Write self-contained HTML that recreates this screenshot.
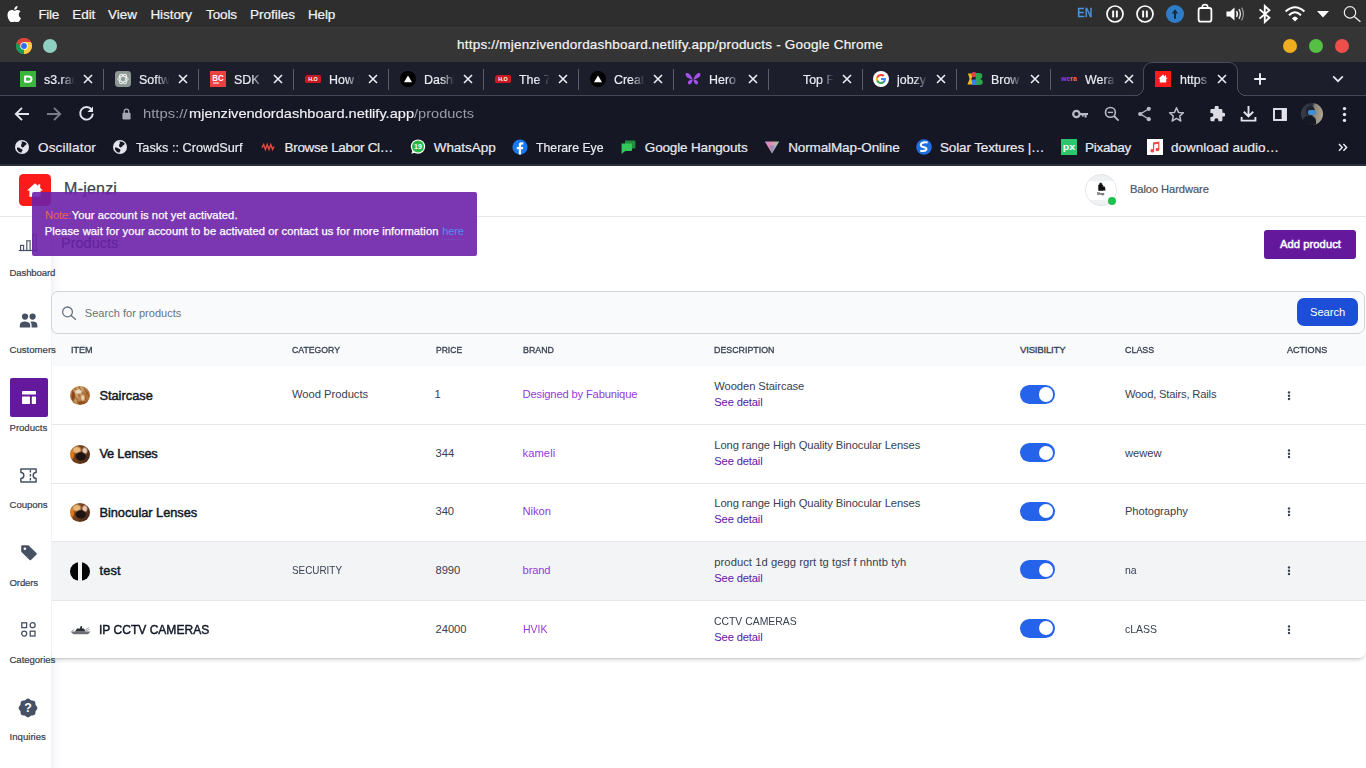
<!DOCTYPE html>
<html>
<head>
<meta charset="utf-8">
<title>products</title>
<style>
*{box-sizing:border-box;margin:0;padding:0}
html,body{width:1366px;height:768px;overflow:hidden;background:#fff;font-family:"Liberation Sans",sans-serif;font-size:12px;line-height:20px}
body{position:relative}
.abs{position:absolute;display:block}
.t{position:absolute;display:block;white-space:pre;transform-origin:0 50%;font-family:"Liberation Sans",sans-serif}
#page{position:absolute;left:0;top:0;width:1366px;height:768px;background:#fff;overflow:hidden}
#menubar{position:absolute;left:0;top:0;width:1366px;height:28px;background:#2e2e2e;border-bottom:1px solid #3b3a39;overflow:hidden}
#titlebar{position:absolute;left:0;top:28px;width:1366px;height:34px;background:#353535;overflow:hidden}
#tabs{position:absolute;left:0;top:62px;width:1366px;height:34px;background:#1c1e2c;overflow:hidden}
.lbl{font-size:13.5px;line-height:20px;color:#eceef4;width:33.7px;transform:scaleX(.92);overflow:hidden;-webkit-text-stroke:.2px #eceef4;-webkit-mask-image:linear-gradient(90deg,#000 55%,transparent 98%);mask-image:linear-gradient(90deg,#000 55%,transparent 98%)}
#toolbar{position:absolute;left:0;top:96px;width:1366px;height:35px;background:#151724;overflow:hidden}
#bookmarks{position:absolute;left:0;top:131px;width:1366px;height:35px;background:#151724;overflow:hidden}
</style>
</head>
<body>
<div id="page">
<div class="abs" style="left:51px;top:217px;width:11px;height:551px;background:linear-gradient(90deg,#f1f2f5,#fafafb 45%,#fff)"></div>
<div class="abs" style="left:0px;top:216px;width:1366px;height:1px;background:#e5e7eb;"></div>
<div class="abs" style="left:19px;top:174px;width:32px;height:32px;background:#fb1b1b;border-radius:4.5px;"></div>
<svg class="abs" style="left:26px;top:182px;" width="18" height="16" viewBox="0 0 18 16"><path d="M9 1.2 L1 8.4 H3.4 V14.8 H14.6 V8.4 H17 L14.2 5.9 V2.2 H12.2 V4.1 Z" fill="#fff"/></svg>
<span class="t" style="left:64.1px;top:177.0px;font-size:16px;line-height:24px;color:#3d4552;letter-spacing:0.205px;-webkit-text-stroke:0.25px #3d4552;">M-jenzi</span>
<div class="abs" style="left:1085px;top:174px;width:32px;height:32px;border-radius:50%;background:#f0f1f3;border:1px solid #e2e4e8;overflow:hidden"><div class="abs" style="left:0;top:6px;width:32px;height:19px;background:#fff"></div></div>
<svg class="abs" style="left:1096.5px;top:182px;" width="9" height="9" viewBox="0 0 9 9"><path d="M1.6 3 H5.8 V8.4 H1.6 Z M2.6 3 V2 A1.1 1.1 0 0 1 4.8 2 V3" fill="#111" stroke="#111" stroke-width=".6"/><path d="M5 4.6 H7.8 L8.6 8.4 H5 Z" fill="#111"/></svg>
<span class="t" style="left:1097.4px;top:191.2px;font-size:3.4px;line-height:6px;color:#111;font-weight:700;transform:scaleX(0.8722);">Shop</span>
<div class="abs" style="left:1108px;top:196.8px;width:8px;height:8px;background:#1fc14e;border-radius:50%;"></div>
<span class="t" style="left:1129.9px;top:179.0px;font-size:11.2px;line-height:20px;color:#4b5563;letter-spacing:-0.088px;-webkit-text-stroke:0.2px #4b5563;">Baloo Hardware</span>
<span class="t" style="left:61.0px;top:232.0px;font-size:14.4px;line-height:22px;color:#1f2937;letter-spacing:0.075px;-webkit-text-stroke:0.25px #1f2937;">Products</span>
<div class="abs" style="left:1264px;top:230px;width:92px;height:28.6px;background:#64199c;border-radius:3px;"></div>
<span class="t" style="left:1280.0px;top:234.0px;font-size:11.2px;line-height:20px;color:#fff;letter-spacing:0.060px;-webkit-text-stroke:0.45px #fff;">Add product</span>
<div class="abs" style="left:51.3px;top:291px;width:1314.2px;height:42.5px;background:#f9fafb;border:1px solid #d1d5db;border-radius:7px"></div>
<svg class="abs" style="left:60px;top:304px;" width="18" height="18" viewBox="0 0 18 18"><circle cx="7.5" cy="7.9" r="4.9" fill="none" stroke="#6b7280" stroke-width="1.3"/><path d="M11 11.5 L15.4 15.2" stroke="#6b7280" stroke-width="1.4" stroke-linecap="round"/></svg>
<span class="t" style="left:84.8px;top:302.6px;font-size:11px;line-height:20px;color:#6b7280;letter-spacing:0.032px;">Search for products</span>
<div class="abs" style="left:1297px;top:298px;width:61px;height:28px;background:#1d4ed8;border-radius:7px;"></div>
<span class="t" style="left:1310.0px;top:302.0px;font-size:11.2px;line-height:20px;color:#fff;letter-spacing:-0.042px;">Search</span>
<div class="abs" style="left:51.5px;top:333.5px;width:1314.5px;height:324.4px;background:#fff;border-radius:0 0 7px 0"></div>
<div class="abs" style="left:51.5px;top:649px;width:1313.5px;height:8.9px;border-radius:0 0 7px 0;box-shadow:0 2px 4px rgba(0,0,0,.14),0 1px 2px rgba(0,0,0,.10);clip-path:inset(0 -10px -10px 0)"></div>
<div class="abs" style="left:51.5px;top:649px;width:1314.5px;height:8.9px;background:#fff;border-radius:0 0 7px 0;"></div>
<div class="abs" style="left:51.5px;top:334px;width:1314.5px;height:31.7px;background:#f9fafb;"></div>
<span class="t" style="left:70.7px;top:339.8px;font-size:9.7px;line-height:20px;color:#374151;transform:scaleX(0.9334);-webkit-text-stroke:0.32px #374151;">ITEM</span>
<span class="t" style="left:292.0px;top:339.8px;font-size:9.7px;line-height:20px;color:#374151;transform:scaleX(0.8975);-webkit-text-stroke:0.32px #374151;">CATEGORY</span>
<span class="t" style="left:435.5px;top:339.8px;font-size:9.7px;line-height:20px;color:#374151;transform:scaleX(0.8815);-webkit-text-stroke:0.32px #374151;">PRICE</span>
<span class="t" style="left:522.5px;top:339.8px;font-size:9.7px;line-height:20px;color:#374151;transform:scaleX(0.9139);-webkit-text-stroke:0.32px #374151;">BRAND</span>
<span class="t" style="left:714.3px;top:339.8px;font-size:9.7px;line-height:20px;color:#374151;transform:scaleX(0.9121);-webkit-text-stroke:0.32px #374151;">DESCRIPTION</span>
<span class="t" style="left:1020.0px;top:339.8px;font-size:9.7px;line-height:20px;color:#374151;letter-spacing:-0.252px;-webkit-text-stroke:0.32px #374151;">VISIBILITY</span>
<span class="t" style="left:1124.9px;top:339.8px;font-size:9.7px;line-height:20px;color:#374151;transform:scaleX(0.9188);-webkit-text-stroke:0.32px #374151;">CLASS</span>
<span class="t" style="left:1287.1px;top:339.8px;font-size:9.7px;line-height:20px;color:#374151;transform:scaleX(0.9335);-webkit-text-stroke:0.32px #374151;">ACTIONS</span>
<div class="abs" style="left:51.5px;top:541.3px;width:1314.5px;height:58.8px;background:#f3f4f6;"></div>
<div class="abs" style="left:51.5px;top:423.8px;width:1314.5px;height:1px;background:#e5e7eb;"></div>
<div class="abs" style="left:51.5px;top:482.7px;width:1314.5px;height:1px;background:#e5e7eb;"></div>
<div class="abs" style="left:51.5px;top:540.8px;width:1314.5px;height:1px;background:#e5e7eb;"></div>
<div class="abs" style="left:51.5px;top:599.6px;width:1314.5px;height:1px;background:#e5e7eb;"></div>
<div class="abs" style="left:70px;top:385.9px;width:20px;height:19.4px;border-radius:50%;background:radial-gradient(ellipse 22% 14% at 42% 30%,#e9dcc6 0 50%,transparent 100%),radial-gradient(ellipse 14% 22% at 64% 62%,#e6cfa6 0 40%,transparent 100%),radial-gradient(ellipse 12% 34% at 16% 52%,#8a4518 0 50%,transparent 100%),radial-gradient(ellipse 30% 12% at 60% 88%,#94501e 0 50%,transparent 100%),repeating-linear-gradient(60deg,rgba(120,60,20,.35) 0 1.5px,transparent 1.5px 4px),linear-gradient(120deg,#b98348,#cfa06a 40%,#ab6a30 70%,#bd8a50)"></div>
<span class="t" style="left:99.4px;top:385.7px;font-size:12.8px;line-height:20px;color:#111827;letter-spacing:0.006px;-webkit-text-stroke:0.45px #111827;">Staircase</span>
<span class="t" style="left:292.0px;top:384.4px;font-size:11.2px;line-height:20px;color:#374151;letter-spacing:-0.014px;">Wood Products</span>
<span class="t" style="left:434.6px;top:384.4px;font-size:11.2px;line-height:20px;color:#374151;">1</span>
<span class="t" style="left:522.6px;top:384.4px;font-size:11.2px;line-height:20px;color:#9639de;letter-spacing:-0.166px;">Designed by Fabunique</span>
<span class="t" style="left:714.3px;top:376.4px;font-size:11.2px;line-height:20px;color:#374151;letter-spacing:-0.082px;">Wooden Staircase</span>
<span class="t" style="left:714.3px;top:392.3px;font-size:11.2px;line-height:20px;color:#5d14a6;letter-spacing:-0.157px;">See detail</span>
<div class="abs" style="left:1020px;top:384.8px;width:35.2px;height:19.2px;border-radius:10px;background:#2563eb"></div>
<div class="abs" style="left:1038.9px;top:387.1px;width:14.6px;height:14.6px;border-radius:50%;background:#fff"></div>
<span class="t" style="left:1124.9px;top:384.4px;font-size:11.2px;line-height:20px;color:#374151;letter-spacing:-0.185px;">Wood, Stairs, Rails</span>
<svg class="abs" style="left:1287.3px;top:390.6px;" width="4" height="10" viewBox="0 0 4 10"><circle cx="2" cy="1.4" r="1.2" fill="#374151"/><circle cx="2" cy="4.7" r="1.2" fill="#374151"/><circle cx="2" cy="8" r="1.2" fill="#374151"/></svg>
<div class="abs" style="left:70px;top:444.5px;width:20px;height:19px;border-radius:50%;background:radial-gradient(ellipse 30% 26% at 54% 60%,#1c1412 0 70%,transparent 100%),radial-gradient(ellipse 16% 22% at 74% 30%,#e8c8b0 0 50%,transparent 100%),radial-gradient(ellipse 26% 22% at 34% 26%,#e9b878 0 55%,transparent 100%),radial-gradient(ellipse 14% 30% at 10% 50%,#e07a18 0 50%,transparent 100%),linear-gradient(120deg,#8a5226,#6e3c1c 55%,#3a2016)"></div>
<span class="t" style="left:99.4px;top:444.3px;font-size:12.8px;line-height:20px;color:#111827;letter-spacing:-0.176px;-webkit-text-stroke:0.45px #111827;">Ve Lenses</span>
<span class="t" style="left:435.6px;top:443.0px;font-size:11.2px;line-height:20px;color:#374151;letter-spacing:-0.057px;">344</span>
<span class="t" style="left:522.6px;top:443.0px;font-size:11.2px;line-height:20px;color:#9639de;letter-spacing:0.045px;">kameli</span>
<span class="t" style="left:714.3px;top:435.0px;font-size:11.2px;line-height:20px;color:#374151;letter-spacing:-0.092px;">Long range High Quality Binocular Lenses</span>
<span class="t" style="left:714.3px;top:450.9px;font-size:11.2px;line-height:20px;color:#5d14a6;letter-spacing:-0.157px;">See detail</span>
<div class="abs" style="left:1020px;top:443.2px;width:35.2px;height:19.2px;border-radius:10px;background:#2563eb"></div>
<div class="abs" style="left:1038.9px;top:445.5px;width:14.6px;height:14.6px;border-radius:50%;background:#fff"></div>
<span class="t" style="left:1124.9px;top:443.0px;font-size:11.2px;line-height:20px;color:#374151;letter-spacing:0.003px;">wewew</span>
<svg class="abs" style="left:1287.3px;top:449.2px;" width="4" height="10" viewBox="0 0 4 10"><circle cx="2" cy="1.4" r="1.2" fill="#374151"/><circle cx="2" cy="4.7" r="1.2" fill="#374151"/><circle cx="2" cy="8" r="1.2" fill="#374151"/></svg>
<div class="abs" style="left:70px;top:502.7px;width:20px;height:19px;border-radius:50%;background:radial-gradient(ellipse 30% 26% at 54% 60%,#1c1412 0 70%,transparent 100%),radial-gradient(ellipse 16% 22% at 74% 30%,#e8c8b0 0 50%,transparent 100%),radial-gradient(ellipse 26% 22% at 34% 26%,#e9b878 0 55%,transparent 100%),radial-gradient(ellipse 14% 30% at 10% 50%,#e07a18 0 50%,transparent 100%),linear-gradient(120deg,#8a5226,#6e3c1c 55%,#3a2016)"></div>
<span class="t" style="left:99.4px;top:502.5px;font-size:12.8px;line-height:20px;color:#111827;letter-spacing:-0.023px;-webkit-text-stroke:0.45px #111827;">Binocular Lenses</span>
<span class="t" style="left:435.6px;top:501.2px;font-size:11.2px;line-height:20px;color:#374151;letter-spacing:-0.157px;">340</span>
<span class="t" style="left:522.6px;top:501.2px;font-size:11.2px;line-height:20px;color:#9639de;letter-spacing:-0.082px;">Nikon</span>
<span class="t" style="left:714.3px;top:493.2px;font-size:11.2px;line-height:20px;color:#374151;letter-spacing:-0.092px;">Long range High Quality Binocular Lenses</span>
<span class="t" style="left:714.3px;top:509.1px;font-size:11.2px;line-height:20px;color:#5d14a6;letter-spacing:-0.157px;">See detail</span>
<div class="abs" style="left:1020px;top:501.6px;width:35.2px;height:19.2px;border-radius:10px;background:#2563eb"></div>
<div class="abs" style="left:1038.9px;top:503.9px;width:14.6px;height:14.6px;border-radius:50%;background:#fff"></div>
<span class="t" style="left:1124.9px;top:501.2px;font-size:11.2px;line-height:20px;color:#374151;letter-spacing:-0.041px;">Photography</span>
<svg class="abs" style="left:1287.3px;top:507.4px;" width="4" height="10" viewBox="0 0 4 10"><circle cx="2" cy="1.4" r="1.2" fill="#374151"/><circle cx="2" cy="4.7" r="1.2" fill="#374151"/><circle cx="2" cy="8" r="1.2" fill="#374151"/></svg>
<div class="abs" style="left:70px;top:561.8px;width:20px;height:19px;border-radius:50%;background:linear-gradient(90deg,#050505 0 38%,#f4f4f4 42% 58%,#050505 62%)"></div>
<span class="t" style="left:99.4px;top:560.5px;font-size:12.8px;line-height:20px;color:#111827;letter-spacing:0.215px;-webkit-text-stroke:0.45px #111827;">test</span>
<span class="t" style="left:292.0px;top:560.2px;font-size:11.2px;line-height:20px;color:#374151;transform:scaleX(0.8837);">SECURITY</span>
<span class="t" style="left:435.6px;top:560.2px;font-size:11.2px;line-height:20px;color:#374151;letter-spacing:-0.123px;">8990</span>
<span class="t" style="left:522.6px;top:560.2px;font-size:11.2px;line-height:20px;color:#9639de;letter-spacing:-0.165px;">brand</span>
<span class="t" style="left:714.3px;top:552.2px;font-size:11.2px;line-height:20px;color:#374151;letter-spacing:0.058px;">product 1d gegg rgrt tg tgsf f nhntb tyh</span>
<span class="t" style="left:714.3px;top:568.1px;font-size:11.2px;line-height:20px;color:#5d14a6;letter-spacing:-0.157px;">See detail</span>
<div class="abs" style="left:1020px;top:560.3px;width:35.2px;height:19.2px;border-radius:10px;background:#2563eb"></div>
<div class="abs" style="left:1038.9px;top:562.6px;width:14.6px;height:14.6px;border-radius:50%;background:#fff"></div>
<span class="t" style="left:1124.9px;top:560.2px;font-size:11.2px;line-height:20px;color:#374151;transform:scaleX(0.9395);">na</span>
<svg class="abs" style="left:1287.3px;top:566.4px;" width="4" height="10" viewBox="0 0 4 10"><circle cx="2" cy="1.4" r="1.2" fill="#374151"/><circle cx="2" cy="4.7" r="1.2" fill="#374151"/><circle cx="2" cy="8" r="1.2" fill="#374151"/></svg>
<svg class="abs" style="left:69.5px;top:623.8px;" width="21" height="11" viewBox="0 0 21 11"><path d="M0.5 7.6 H20.5 L18 10.2 H3.4 Z" fill="#6b6f76"/><path d="M5 7.4 L7 4.6 H10 L10.6 2 H11.8 L12.2 4.6 H14 L15.6 7.4 Z" fill="#2c2f35"/><path d="M14.6 6.8 L18.8 3.4 M16 7 L19.8 5" stroke="#8d9096" stroke-width=".8"/><path d="M2 7 L4.4 5.6" stroke="#8d9096" stroke-width=".8"/></svg>
<span class="t" style="left:99.4px;top:620.1px;font-size:12.8px;line-height:20px;color:#111827;transform:scaleX(0.9411);-webkit-text-stroke:0.45px #111827;">IP CCTV CAMERAS</span>
<span class="t" style="left:435.6px;top:618.8px;font-size:11.2px;line-height:20px;color:#374151;letter-spacing:-0.065px;">24000</span>
<span class="t" style="left:522.6px;top:618.8px;font-size:11.2px;line-height:20px;color:#9639de;transform:scaleX(0.9378);">HVIK</span>
<span class="t" style="left:714.3px;top:610.8px;font-size:11.2px;line-height:20px;color:#374151;transform:scaleX(0.9292);">CCTV CAMERAS</span>
<span class="t" style="left:714.3px;top:626.7px;font-size:11.2px;line-height:20px;color:#5d14a6;letter-spacing:-0.157px;">See detail</span>
<div class="abs" style="left:1020px;top:618.6px;width:35.2px;height:19.2px;border-radius:10px;background:#2563eb"></div>
<div class="abs" style="left:1038.9px;top:620.9px;width:14.6px;height:14.6px;border-radius:50%;background:#fff"></div>
<span class="t" style="left:1124.9px;top:618.8px;font-size:11.2px;line-height:20px;color:#374151;transform:scaleX(0.9385);">cLASS</span>
<svg class="abs" style="left:1287.3px;top:625.0px;" width="4" height="10" viewBox="0 0 4 10"><circle cx="2" cy="1.4" r="1.2" fill="#374151"/><circle cx="2" cy="4.7" r="1.2" fill="#374151"/><circle cx="2" cy="8" r="1.2" fill="#374151"/></svg>
<svg class="abs" style="left:18px;top:232px;" width="20" height="20" viewBox="0 0 20 20"><g fill="none" stroke="#465264" stroke-width="1.15"><rect x="2.6" y="13.4" width="3" height="5.1"/><rect x="8.8" y="8.8" width="3.3" height="9.7"/><rect x="15" y="2.6" width="3.2" height="15.9"/><path d="M0.8 18.5 H19"/></g></svg>
<svg class="abs" style="left:19px;top:312px;" width="20" height="17" viewBox="0 0 20 17"><g fill="#465264"><circle cx="6" cy="4.6" r="3.1"/><circle cx="13.6" cy="4.6" r="3.1"/><path d="M0.8 15.6 V13.2 Q0.8 9.4 6 9.4 Q9.2 9.4 10.4 11 Q11.2 12 11.2 13.2 V15.6 Z"/><path d="M12.6 15.6 V13 Q12.6 10.8 11 9.7 Q12.2 9.4 13.6 9.4 Q18.4 9.4 18.4 13.2 V15.6 Z"/></g></svg>
<div class="abs" style="left:10px;top:378.2px;width:38px;height:38.4px;background:#64199c;border-radius:2px;"></div>
<svg class="abs" style="left:21.5px;top:391px;" width="14" height="13" viewBox="0 0 14 13"><g fill="#fff"><rect x="0" y="0" width="14" height="3.6" rx=".7"/><rect x="0" y="5.4" width="8" height="7.6" rx=".7"/><rect x="9.8" y="5.4" width="4.2" height="7.6" rx=".7"/></g></svg>
<svg class="abs" style="left:19px;top:466.5px;" width="19" height="17" viewBox="0 0 19 17"><path d="M1.9 1.9 H17.1 V5.6 A2.9 2.9 0 0 0 17.1 11.4 V15.1 H1.9 V11.4 A2.9 2.9 0 0 0 1.9 5.6 Z" fill="none" stroke="#465264" stroke-width="1.5" stroke-linejoin="round"/><path d="M11.4 3 V14" stroke="#465264" stroke-width="1.4" stroke-dasharray="2.4 1.6"/></svg>
<svg class="abs" style="left:19.5px;top:544px;" width="18" height="17" viewBox="0 0 18 17"><path d="M1.2 2.4 Q1.2 1.2 2.4 1.2 H8.4 L16.6 9.2 Q17.2 9.9 16.6 10.6 L11 16 Q10.3 16.6 9.6 16 L1.2 7.8 Z" fill="#465264"/><circle cx="4.9" cy="4.8" r="1.3" fill="#fff"/></svg>
<svg class="abs" style="left:21px;top:622px;" width="15" height="15" viewBox="0 0 15 15"><g fill="none" stroke="#465264" stroke-width="1.3"><rect x="0.8" y="0.8" width="4.8" height="4.8"/><circle cx="11.6" cy="3.2" r="2.5"/><circle cx="3.2" cy="11.6" r="2.5"/><rect x="9.2" y="9.2" width="4.8" height="4.8"/></g></svg>
<svg class="abs" style="left:18.4px;top:697.5px;" width="20" height="20" viewBox="0 0 20 20"><g fill="#465264"><rect x="2.55" y="2.55" width="14.9" height="14.9" rx="3.2"/><rect x="2.55" y="2.55" width="14.9" height="14.9" rx="3.2" transform="rotate(45 10 10)"/></g><text x="10.1" y="14.4" font-size="12.4" font-weight="700" fill="#fff" text-anchor="middle" font-family="Liberation Sans">?</text></svg>
<span class="t" style="left:9.5px;top:262.6px;font-size:9.6px;line-height:20px;color:#374151;letter-spacing:-0.137px;-webkit-text-stroke:0.2px #374151;">Dashboard</span>
<span class="t" style="left:9.5px;top:340.0px;font-size:9.6px;line-height:20px;color:#374151;letter-spacing:0.001px;-webkit-text-stroke:0.2px #374151;">Customers</span>
<span class="t" style="left:9.5px;top:418.0px;font-size:9.6px;line-height:20px;color:#374151;letter-spacing:-0.022px;-webkit-text-stroke:0.2px #374151;">Products</span>
<span class="t" style="left:9.5px;top:494.8px;font-size:9.6px;line-height:20px;color:#374151;letter-spacing:-0.044px;-webkit-text-stroke:0.2px #374151;">Coupons</span>
<span class="t" style="left:9.5px;top:572.7px;font-size:9.6px;line-height:20px;color:#374151;letter-spacing:-0.138px;-webkit-text-stroke:0.2px #374151;">Orders</span>
<span class="t" style="left:9.5px;top:649.7px;font-size:9.6px;line-height:20px;color:#374151;letter-spacing:-0.061px;-webkit-text-stroke:0.2px #374151;">Categories</span>
<span class="t" style="left:9.5px;top:727.2px;font-size:9.6px;line-height:20px;color:#374151;letter-spacing:0.015px;-webkit-text-stroke:0.2px #374151;">Inquiries</span>
<div class="abs" style="left:32px;top:192px;width:445px;height:63.8px;background:rgba(107,33,168,.9);border-radius:2px"></div>
<span class="t" style="left:45.0px;top:205.2px;font-size:11.2px;line-height:20px;color:#f5624c;letter-spacing:-0.150px;">Note:</span>
<span class="t" style="left:71.7px;top:205.2px;font-size:11.2px;line-height:20px;color:#fff;letter-spacing:0.062px;-webkit-text-stroke:0.25px #fff;">Your account is not yet activated.</span>
<span class="t" style="left:44.7px;top:221.3px;font-size:11.2px;line-height:20px;color:#fff;letter-spacing:0.089px;-webkit-text-stroke:0.25px #fff;">Please wait for your account to be activated or contact us for more information</span>
<span class="t" style="left:442.2px;top:221.3px;font-size:11.2px;line-height:20px;color:#4f8ef7;letter-spacing:-0.202px;">here</span>
<div class="abs" style="left:442.2px;top:239px;width:21.6px;height:1px;background:rgba(120,150,240,.12);"></div>
</div>
<div id="menubar">
<svg class="abs" style="left:5.5px;top:5.5px;" width="16.5" height="16.5" viewBox="0 0 24 24"><path fill="#fff" d="M12.152 6.896c-.948 0-2.415-1.078-3.96-1.04-2.04.027-3.91 1.183-4.961 3.014-2.117 3.675-.546 9.103 1.519 12.09 1.013 1.454 2.208 3.09 3.792 3.039 1.52-.065 2.09-.987 3.935-.987 1.831 0 2.35.987 3.96.948 1.637-.026 2.676-1.48 3.676-2.948 1.156-1.688 1.636-3.325 1.662-3.415-.039-.013-3.182-1.221-3.22-4.857-.026-3.04 2.48-4.494 2.597-4.559-1.429-2.09-3.623-2.324-4.39-2.376-2-.156-3.675 1.09-4.61 1.09zM15.53 3.83c.843-1.012 1.4-2.427 1.245-3.83-1.207.052-2.662.805-3.532 1.818-.78.896-1.454 2.338-1.273 3.714 1.338.104 2.715-.688 3.559-1.701"/></svg>
<span class="t" style="left:38.4px;top:4.5px;font-size:13.5px;line-height:20px;color:#f4f4f4;letter-spacing:-0.291px;-webkit-text-stroke:0.2px #f4f4f4;">File</span>
<span class="t" style="left:72.3px;top:4.5px;font-size:13.5px;line-height:20px;color:#f4f4f4;letter-spacing:-0.066px;-webkit-text-stroke:0.2px #f4f4f4;">Edit</span>
<span class="t" style="left:108.0px;top:4.5px;font-size:13.5px;line-height:20px;color:#f4f4f4;letter-spacing:-0.008px;-webkit-text-stroke:0.2px #f4f4f4;">View</span>
<span class="t" style="left:150.4px;top:4.5px;font-size:13.5px;line-height:20px;color:#f4f4f4;letter-spacing:-0.059px;-webkit-text-stroke:0.2px #f4f4f4;">History</span>
<span class="t" style="left:206.0px;top:4.5px;font-size:13.5px;line-height:20px;color:#f4f4f4;letter-spacing:-0.103px;-webkit-text-stroke:0.2px #f4f4f4;">Tools</span>
<span class="t" style="left:250.0px;top:4.5px;font-size:13.5px;line-height:20px;color:#f4f4f4;letter-spacing:-0.002px;-webkit-text-stroke:0.2px #f4f4f4;">Profiles</span>
<span class="t" style="left:308.0px;top:4.5px;font-size:13.5px;line-height:20px;color:#f4f4f4;letter-spacing:-0.191px;-webkit-text-stroke:0.2px #f4f4f4;">Help</span>
<span class="t" style="left:1077.4px;top:4.0px;font-size:12.5px;line-height:20px;color:#4d94db;transform:scaleX(1.0389);-webkit-text-stroke:0.3px #4d94db;font-family:'Liberation Mono',monospace;">EN</span>
<svg class="abs" style="left:1105px;top:4px;" width="20" height="20" viewBox="0 0 20 20"><circle cx="10" cy="10" r="8" fill="none" stroke="#fff" stroke-width="1.7"/><rect x="7.2" y="6.6" width="1.9" height="6.8" fill="#fff"/><rect x="10.9" y="6.6" width="1.9" height="6.8" fill="#fff"/></svg>
<svg class="abs" style="left:1135px;top:4px;" width="20" height="20" viewBox="0 0 20 20"><circle cx="10" cy="10" r="8" fill="none" stroke="#fff" stroke-width="1.7"/><rect x="7.2" y="6.6" width="1.9" height="6.8" fill="#fff"/><rect x="10.9" y="6.6" width="1.9" height="6.8" fill="#fff"/></svg>
<svg class="abs" style="left:1165px;top:4px;" width="20" height="20" viewBox="0 0 20 20"><circle cx="10" cy="10" r="9" fill="#2f7dc6"/><path d="M10 5.2 L6.8 9.6 H9 V14.8 H11 V9.6 H13.2 Z" fill="#1c2a3a"/></svg>
<svg class="abs" style="left:1196px;top:3px;" width="18" height="21" viewBox="0 0 18 21"><rect x="2.6" y="5" width="12.8" height="13.6" rx="2.2" fill="none" stroke="#fff" stroke-width="1.8"/><path d="M6.3 5 V3.8 A2.7 2.2 0 0 1 11.7 3.8 V5" fill="none" stroke="#fff" stroke-width="1.6"/></svg>
<svg class="abs" style="left:1225px;top:4px;" width="22" height="20" viewBox="0 0 22 20"><path d="M1.5 7.5 H5 L9.5 3.5 V16.5 L5 12.5 H1.5 Z" fill="#fff"/><path d="M11.6 7.2 Q13.2 10 11.6 12.8" stroke="#fff" stroke-width="1.5" fill="none"/><path d="M14 5.2 Q16.8 10 14 14.8" stroke="#e0e0e0" stroke-width="1.4" fill="none"/><path d="M16.6 3.6 Q20.2 10 16.6 16.4" stroke="#9a9a9a" stroke-width="1.2" fill="none"/></svg>
<svg class="abs" style="left:1256px;top:4px;" width="18" height="20" viewBox="0 0 18 20"><path d="M3.6 5.4 L13.4 13.8 L8.8 18 V2 L13.4 6.2 L3.6 14.6" fill="none" stroke="#fff" stroke-width="1.9" stroke-linejoin="miter"/></svg>
<svg class="abs" style="left:1284px;top:4px;" width="22" height="20" viewBox="0 0 22 20"><path d="M1.6 7.6 Q11 -1 20.4 7.6" stroke="#fff" stroke-width="2" fill="none"/><path d="M5 11.2 Q11 5.4 17 11.2" stroke="#fff" stroke-width="2" fill="none"/><path d="M11 12.6 Q12.8 13 14 14.4 L11 17.6 L8 14.4 Q9.2 13 11 12.6Z" fill="#fff"/></svg>
<svg class="abs" style="left:1316px;top:9px;" width="14" height="10" viewBox="0 0 14 10"><path d="M1 2 H13 L7 8.4 Z" fill="#fff"/></svg>
<svg class="abs" style="left:1340px;top:4px;" width="22" height="20" viewBox="0 0 22 20"><circle cx="10" cy="8.4" r="5.7" fill="none" stroke="#f0f0f0" stroke-width="1.2"/><path d="M14.2 12.5 L20.4 17.8" stroke="#f0f0f0" stroke-width="1.3"/></svg>
</div>
<div id="titlebar">
<svg class="abs" style="left:16px;top:10px;" width="16" height="16" viewBox="0 0 16 16"><circle cx="8" cy="8" r="8" fill="#db4437"/>
<path d="M8 8 L1.07 12 A8 8 0 0 1 1.07 4 Z" fill="#db4437"/>
<path d="M8 8 L1.07 4 A8 8 0 0 0 8 16 L11.5 10 Z" fill="#0f9d58"/>
<path d="M8 8 L8 16 A8 8 0 0 0 14.93 4 L8 4 Z" fill="#ffcd40"/>
<path d="M8 4 L14.93 4 A8 8 0 0 0 1.07 4 L4.5 10 Z" fill="#db4437"/>
<circle cx="8" cy="8" r="3.7" fill="#fff"/><circle cx="8" cy="8" r="2.9" fill="#2a6ff0"/></svg>
<div class="abs" style="left:43px;top:11px;width:14px;height:14px;background:#8fcfc1;border-radius:50%;"></div>
<span class="t" style="left:457.0px;top:6.5px;font-size:13.5px;line-height:20px;color:#f4f4f4;letter-spacing:0.216px;-webkit-text-stroke:0.2px #f4f4f4;">https://mjenzivendordashboard.netlify.app/products - Google Chrome</span>
<div class="abs" style="left:1283px;top:11px;width:14px;height:14px;background:#f0ad1f;border-radius:50%;"></div>
<div class="abs" style="left:1309px;top:11px;width:14px;height:14px;background:#55c043;border-radius:50%;"></div>
<div class="abs" style="left:1335px;top:11px;width:14px;height:14px;background:#ee4f4b;border-radius:50%;"></div>
</div>
<div id="tabs">
<svg class="abs" style="left:20px;top:9px;" width="16" height="16" viewBox="0 0 16 16"><rect width="16" height="16" fill="#3bb43c"/><path d="M5.1 5.5 H8.8 Q11.5 5.5 11.5 8.1 Q11.5 10.7 8.8 10.7 H5.1 Z" fill="none" stroke="#fff" stroke-width="2" stroke-linejoin="round"/></svg>
<span class="t lbl" style="left:44.0px;top:7.5px;">s3.rac</span>
<svg class="abs" style="left:83px;top:12.3px;" width="10" height="10" viewBox="0 0 10 10"><path d="M1 1 L9 9 M9 1 L1 9" stroke="#eceef4" stroke-width="1.6" fill="none"/></svg>
<div class="abs" style="left:103px;top:7.4px;width:1.2px;height:20.2px;background:#5b5d6c;"></div>
<svg class="abs" style="left:115px;top:9px;" width="16" height="16" viewBox="0 0 16 16"><rect width="16" height="16" rx="3.4" fill="#8d9894"/><g fill="none" stroke="#eef1f0" stroke-width="0.9"><ellipse cx="8" cy="8" rx="5.2" ry="2.7"/><ellipse cx="8" cy="8" rx="5.2" ry="2.7" transform="rotate(60 8 8)"/><ellipse cx="8" cy="8" rx="5.2" ry="2.7" transform="rotate(120 8 8)"/></g></svg>
<span class="t lbl" style="left:139.0px;top:7.5px;">Softw</span>
<svg class="abs" style="left:178px;top:12.3px;" width="10" height="10" viewBox="0 0 10 10"><path d="M1 1 L9 9 M9 1 L1 9" stroke="#eceef4" stroke-width="1.6" fill="none"/></svg>
<div class="abs" style="left:198px;top:7.4px;width:1.2px;height:20.2px;background:#5b5d6c;"></div>
<svg class="abs" style="left:210px;top:9px;" width="16" height="16" viewBox="0 0 16 16"><rect width="16" height="16" fill="#e9423f"/><text x="8" y="9.6" font-size="8.6" font-weight="700" fill="#fff" text-anchor="middle" font-family="Liberation Sans" textLength="11.5" lengthAdjust="spacingAndGlyphs">BC</text><rect x="3" y="11.4" width="6" height="1.3" fill="#fff" opacity=".8"/></svg>
<span class="t lbl" style="left:234.0px;top:7.5px;">SDK C</span>
<svg class="abs" style="left:273px;top:12.3px;" width="10" height="10" viewBox="0 0 10 10"><path d="M1 1 L9 9 M9 1 L1 9" stroke="#eceef4" stroke-width="1.6" fill="none"/></svg>
<div class="abs" style="left:293px;top:7.4px;width:1.2px;height:20.2px;background:#5b5d6c;"></div>
<svg class="abs" style="left:305px;top:9px;" width="16" height="16" viewBox="0 0 16 16"><path d="M2 4 H15 L16 5 V11 L15 12 H1 L0 11 V6 Z" fill="#c9181e"/><text x="8" y="10.3" font-size="5.4" font-weight="700" fill="#fff" text-anchor="middle" font-family="Liberation Sans">H.O</text></svg>
<span class="t lbl" style="left:329.0px;top:7.5px;">How S</span>
<svg class="abs" style="left:368px;top:12.3px;" width="10" height="10" viewBox="0 0 10 10"><path d="M1 1 L9 9 M9 1 L1 9" stroke="#eceef4" stroke-width="1.6" fill="none"/></svg>
<div class="abs" style="left:388px;top:7.4px;width:1.2px;height:20.2px;background:#5b5d6c;"></div>
<svg class="abs" style="left:400px;top:9px;" width="16" height="16" viewBox="0 0 16 16"><circle cx="8" cy="8" r="8" fill="#000"/><path d="M8 4.4 L12 11.2 H4 Z" fill="#fff"/></svg>
<span class="t lbl" style="left:424.0px;top:7.5px;">Dashl</span>
<svg class="abs" style="left:463px;top:12.3px;" width="10" height="10" viewBox="0 0 10 10"><path d="M1 1 L9 9 M9 1 L1 9" stroke="#eceef4" stroke-width="1.6" fill="none"/></svg>
<div class="abs" style="left:483px;top:7.4px;width:1.2px;height:20.2px;background:#5b5d6c;"></div>
<svg class="abs" style="left:495px;top:9px;" width="16" height="16" viewBox="0 0 16 16"><path d="M2 4 H15 L16 5 V11 L15 12 H1 L0 11 V6 Z" fill="#c9181e"/><text x="8" y="10.3" font-size="5.4" font-weight="700" fill="#fff" text-anchor="middle" font-family="Liberation Sans">H.O</text></svg>
<span class="t lbl" style="left:519.0px;top:7.5px;">The 7</span>
<svg class="abs" style="left:558px;top:12.3px;" width="10" height="10" viewBox="0 0 10 10"><path d="M1 1 L9 9 M9 1 L1 9" stroke="#eceef4" stroke-width="1.6" fill="none"/></svg>
<div class="abs" style="left:578px;top:7.4px;width:1.2px;height:20.2px;background:#5b5d6c;"></div>
<svg class="abs" style="left:590px;top:9px;" width="16" height="16" viewBox="0 0 16 16"><circle cx="8" cy="8" r="8" fill="#000"/><path d="M8 4.4 L12 11.2 H4 Z" fill="#fff"/></svg>
<span class="t lbl" style="left:614.0px;top:7.5px;">Creat</span>
<svg class="abs" style="left:653px;top:12.3px;" width="10" height="10" viewBox="0 0 10 10"><path d="M1 1 L9 9 M9 1 L1 9" stroke="#eceef4" stroke-width="1.6" fill="none"/></svg>
<div class="abs" style="left:673px;top:7.4px;width:1.2px;height:20.2px;background:#5b5d6c;"></div>
<svg class="abs" style="left:685px;top:9px;" width="16" height="16" viewBox="0 0 16 16"><g fill="#a450f0"><path d="M7.6 8.2 C5.6 2.6 2.2 1.2 0.8 2.2 C0 4.4 1.6 7.6 7.6 8.2Z"/><path d="M8.4 8.2 C10.4 2.6 13.8 1.2 15.2 2.2 C16 4.4 14.4 7.6 8.4 8.2Z"/><path d="M7.6 8.6 C4.4 8.6 2.6 10.4 3 12.6 C4.4 14.6 7 13.4 7.6 8.6Z"/><path d="M8.4 8.6 C11.6 8.6 13.4 10.4 13 12.6 C11.6 14.6 9 13.4 8.4 8.6Z"/></g></svg>
<span class="t lbl" style="left:709.0px;top:7.5px;">Hero</span>
<svg class="abs" style="left:748px;top:12.3px;" width="10" height="10" viewBox="0 0 10 10"><path d="M1 1 L9 9 M9 1 L1 9" stroke="#eceef4" stroke-width="1.6" fill="none"/></svg>
<div class="abs" style="left:768px;top:7.4px;width:1.2px;height:20.2px;background:#5b5d6c;"></div>
<svg class="abs" style="left:779px;top:9px;" width="16" height="16" viewBox="0 0 16 16"><circle cx="8" cy="8" r="6.4" fill="none" stroke="#3a1a22" stroke-width="0.8" stroke-dasharray="1 2.2" opacity=".8"/></svg>
<span class="t lbl" style="left:803.0px;top:7.5px;">Top F</span>
<svg class="abs" style="left:842px;top:12.3px;" width="10" height="10" viewBox="0 0 10 10"><path d="M1 1 L9 9 M9 1 L1 9" stroke="#eceef4" stroke-width="1.6" fill="none"/></svg>
<div class="abs" style="left:862px;top:7.4px;width:1.2px;height:20.2px;background:#5b5d6c;"></div>
<svg class="abs" style="left:873px;top:9px;" width="16" height="16" viewBox="0 0 16 16"><circle cx="8" cy="8" r="8" fill="#fff"/><path d="M12.9 8.1 c0-.4 0-.7-.1-1 H8 v1.9 h2.75 c-.12.63-.48 1.17-1.02 1.53 v1.27 h1.65 C12.35 10.9 12.9 9.6 12.9 8.1Z" fill="#4285f4"/><path d="M8 13.1 c1.38 0 2.53-.46 3.38-1.24 l-1.65-1.27 c-.46.3-1.04.49-1.73.49-1.33 0-2.46-.9-2.86-2.1 H3.43 v1.32 C4.27 11.97 6 13.1 8 13.1Z" fill="#34a853"/><path d="M5.14 8.98 c-.1-.3-.16-.63-.16-.98 s.06-.67.16-.98 V5.7 H3.43 C3.08 6.4 2.9 7.17 2.9 8 s.2 1.6.53 2.3 l1.7-1.32Z" fill="#fbbc05"/><path d="M8 4.92 c.75 0 1.42.26 1.95.76 l1.46-1.46 C10.53 3.4 9.38 2.9 8 2.9 6 2.9 4.27 4.03 3.43 5.7 l1.7 1.32 C5.54 5.8 6.67 4.92 8 4.92Z" fill="#ea4335"/></svg>
<span class="t lbl" style="left:897.0px;top:7.5px;">jobzy</span>
<svg class="abs" style="left:936px;top:12.3px;" width="10" height="10" viewBox="0 0 10 10"><path d="M1 1 L9 9 M9 1 L1 9" stroke="#eceef4" stroke-width="1.6" fill="none"/></svg>
<div class="abs" style="left:956px;top:7.4px;width:1.2px;height:20.2px;background:#5b5d6c;"></div>
<svg class="abs" style="left:967px;top:9px;" width="16" height="16" viewBox="0 0 16 16"><path d="M1 2.6 H6.6 L4.4 8 L6 13.4 H0.4 L2.6 8 Z" fill="#f6b71c"/><circle cx="7" cy="3.6" r="2.6" fill="#e9423f"/><path d="M8.6 2 H12 Q15.4 2 15.4 5 Q15.4 7.4 13 8 Q15.8 8.6 15.8 11 Q15.8 14 12.4 14 H8.6 Z" fill="#2fa64e"/><path d="M5 8.6 H9.4 V14 H5 Z" fill="#3f7ee8"/></svg>
<span class="t lbl" style="left:991.0px;top:7.5px;">Brow</span>
<svg class="abs" style="left:1030px;top:12.3px;" width="10" height="10" viewBox="0 0 10 10"><path d="M1 1 L9 9 M9 1 L1 9" stroke="#eceef4" stroke-width="1.6" fill="none"/></svg>
<div class="abs" style="left:1050px;top:7.4px;width:1.2px;height:20.2px;background:#5b5d6c;"></div>
<svg class="abs" style="left:1061px;top:9px;" width="16" height="16" viewBox="0 0 16 16"><text x="0" y="10.2" font-size="6.6" font-weight="700" font-family="Liberation Sans" fill="#8a3fe0" textLength="16" lengthAdjust="spacingAndGlyphs">we<tspan fill="#f0703c">ra</tspan></text></svg>
<span class="t lbl" style="left:1085.0px;top:7.5px;">Wera</span>
<svg class="abs" style="left:1124px;top:12.3px;" width="10" height="10" viewBox="0 0 10 10"><path d="M1 1 L9 9 M9 1 L1 9" stroke="#eceef4" stroke-width="1.6" fill="none"/></svg>
<div class="abs" style="left:0px;top:33px;width:1366px;height:1px;background:#44465a;"></div>
<div class="abs" style="left:1143px;top:0px;width:95px;height:34px;background:#151724;border:1px solid #4a4c5e;border-bottom:none;border-radius:9px 9px 0 0"></div>
<div class="abs" style="left:1135px;top:25px;width:9px;height:9px;background:radial-gradient(circle at 0 0,#1c1e2c 8px,#4a4c5e 8px,#4a4c5e 9px,#151724 9px)"></div>
<div class="abs" style="left:1237px;top:25px;width:9px;height:9px;background:radial-gradient(circle at 100% 0,#1c1e2c 8px,#4a4c5e 8px,#4a4c5e 9px,#151724 9px)"></div>
<svg class="abs" style="left:1155px;top:9px;" width="16" height="16" viewBox="0 0 16 16"><rect width="16" height="16" fill="#fb1b1b"/><path d="M8 3.6 L3.4 7.8 H4.8 V11.6 H11.2 V7.8 H12.6 L11 6.3 V4.2 H10 V5.4 Z" fill="#fff"/></svg>
<span class="t lbl" style="left:1179.6px;top:7.5px;">https</span>
<svg class="abs" style="left:1217px;top:12.3px;" width="10" height="10" viewBox="0 0 10 10"><path d="M1 1 L9 9 M9 1 L1 9" stroke="#eceef4" stroke-width="1.6" fill="none"/></svg>
<svg class="abs" style="left:1253.8px;top:11px;" width="12" height="12" viewBox="0 0 12 12"><path d="M6 0.2 V11.8 M0.2 6 H11.8" stroke="#f0f1f6" stroke-width="1.9"/></svg>
<svg class="abs" style="left:1332px;top:13px;" width="12" height="8" viewBox="0 0 12 8"><path d="M1.2 1.4 L6 6.2 L10.8 1.4" stroke="#e6e7ee" stroke-width="1.7" fill="none"/></svg>
</div>
<div id="toolbar">
<svg class="abs" style="left:14px;top:9.6px;" width="16" height="16" viewBox="0 0 16 16"><path d="M15 8 H2.4 M8 1.8 L1.8 8 L8 14.2" stroke="#e4e5ec" stroke-width="1.9" fill="none"/></svg>
<svg class="abs" style="left:46px;top:9.6px;" width="16" height="16" viewBox="0 0 16 16"><path d="M1 8 H13.6 M8 1.8 L14.2 8 L8 14.2" stroke="#7a7c8a" stroke-width="1.9" fill="none"/></svg>
<svg class="abs" style="left:78px;top:9.2px;" width="17" height="17" viewBox="0 0 17 17"><path d="M13.6 4.6 A6.3 6.3 0 1 0 14.8 8.6" stroke="#e4e5ec" stroke-width="1.9" fill="none"/><path d="M15 1.4 V7 H9.4 Z" fill="#e4e5ec"/></svg>
<svg class="abs" style="left:121.6px;top:11.6px;" width="9" height="12" viewBox="0 0 9 12"><rect x="0.4" y="4.8" width="8.2" height="6.6" rx="1" fill="#a4a6b1"/><path d="M2.3 5 V3.3 A2.2 2.2 0 0 1 6.7 3.3 V5" stroke="#a4a6b1" stroke-width="1.3" fill="none"/></svg>
<span class="t" style="left:142.6px;top:7.5px;font-size:13.5px;line-height:20px;color:#9b9dab;transform:scaleX(1.0979);">https://</span>
<span class="t" style="left:188.6px;top:7.5px;font-size:13.5px;line-height:20px;color:#f1f1f5;transform:scaleX(1.0797);-webkit-text-stroke:0.15px #f1f1f5;">mjenzivendordashboard.netlify.app</span>
<span class="t" style="left:414.0px;top:7.5px;font-size:13.5px;line-height:20px;color:#9b9dab;transform:scaleX(1.0805);">/products</span>
<svg class="abs" style="left:1072px;top:11px;" width="17" height="14" viewBox="0 0 17 14"><circle cx="4.4" cy="7" r="3.2" fill="none" stroke="#b9bbc6" stroke-width="2.2"/><path d="M7.4 7 H16 M13.6 7 V10.6 M10.8 7 V9.6" stroke="#b9bbc6" stroke-width="2.1" fill="none"/></svg>
<svg class="abs" style="left:1104px;top:10px;" width="16" height="16" viewBox="0 0 16 16"><circle cx="6.4" cy="6.4" r="4.9" fill="none" stroke="#b9bbc6" stroke-width="1.6"/><path d="M10 10 L14.6 14.6" stroke="#b9bbc6" stroke-width="1.8"/><path d="M3.8 6.4 H9" stroke="#b9bbc6" stroke-width="1.4"/></svg>
<svg class="abs" style="left:1137px;top:10px;" width="15" height="16" viewBox="0 0 15 16"><path d="M11.6 3 L3.4 8 L11.6 13" stroke="#b9bbc6" stroke-width="1.4" fill="none"/><circle cx="11.8" cy="2.8" r="2.1" fill="#b9bbc6"/><circle cx="3.2" cy="8" r="2.1" fill="#b9bbc6"/><circle cx="11.8" cy="13.2" r="2.1" fill="#b9bbc6"/></svg>
<svg class="abs" style="left:1167.5px;top:9.5px;" width="17" height="17" viewBox="0 0 17 17"><path d="M8.5 1.8 L10.5 6.4 L15.4 6.8 L11.7 10.1 L12.8 15 L8.5 12.4 L4.2 15 L5.3 10.1 L1.6 6.8 L6.5 6.4 Z" stroke="#b9bbc6" stroke-width="1.5" fill="none" stroke-linejoin="round"/></svg>
<svg class="abs" style="left:1207.5px;top:9.5px;" width="17" height="17" viewBox="0 0 17 17"><path d="M6.8 1 A1.9 1.9 0 0 1 10.6 1.6 V3 H13.2 Q14.4 3 14.4 4.2 V6.8 H15.4 A1.9 1.9 0 0 1 15.4 10.6 H14.4 V14 Q14.4 15.2 13.2 15.2 H10.4 V14.2 A2 2 0 0 0 6.4 14.2 V15.2 H3.6 Q2.4 15.2 2.4 14 V11 H3.4 A2 2 0 0 0 3.4 7 H2.4 V4.2 Q2.4 3 3.6 3 H6.6 V1.6 Z" fill="#dcdde4"/></svg>
<svg class="abs" style="left:1239.5px;top:9px;" width="17" height="18" viewBox="0 0 17 18"><path d="M8.5 1 V11 M3.8 6.8 L8.5 11.4 L13.2 6.8" stroke="#e4e5ec" stroke-width="1.9" fill="none"/><path d="M1.6 12 V15.6 H15.4 V12" stroke="#e4e5ec" stroke-width="1.9" fill="none"/></svg>
<svg class="abs" style="left:1273px;top:11.5px;" width="14" height="13" viewBox="0 0 14 13"><rect x="1" y="1" width="12" height="11" fill="none" stroke="#e4e5ec" stroke-width="1.9"/><rect x="8.6" y="1" width="4.4" height="11" fill="#e4e5ec"/></svg>
<div class="abs" style="left:1301px;top:7px;width:22px;height:22px;border-radius:50%;overflow:hidden;background:linear-gradient(100deg,#3a3f4b 0%,#2a2f3a 45%,#8b8577 55%,#b7ad98 100%)"><div class="abs" style="left:5px;top:3px;width:9px;height:10px;border-radius:50%;background:#1d2330"></div><div class="abs" style="left:6.5px;top:7px;width:8px;height:5px;border-radius:2px;background:#3f8fd0"></div><div class="abs" style="left:2px;top:13px;width:13px;height:10px;border-radius:5px 5px 0 0;background:#161a24"></div></div>
<svg class="abs" style="left:1342px;top:9.5px;" width="5" height="17" viewBox="0 0 5 17"><circle cx="2.5" cy="2.6" r="1.7" fill="#e4e5ec"/><circle cx="2.5" cy="8.5" r="1.7" fill="#e4e5ec"/><circle cx="2.5" cy="14.4" r="1.7" fill="#e4e5ec"/></svg>
</div>
<div id="bookmarks">
<svg class="abs" style="left:13.9px;top:8.1px;" width="16" height="16" viewBox="0 0 16 16"><circle cx="8" cy="8" r="7" fill="#e4e5ec"/><path d="M7.4 2.6 Q10.6 2 12.6 4.2 Q12.8 6.2 10.8 6.6 Q10.4 8.6 8.2 8.4 Q6.4 7.6 7.2 5.6 Q8.6 4.6 7.4 2.6Z M3 8.6 Q5 8 6.4 9.4 Q8.6 9.8 8.6 11.6 Q7.6 12.4 7.4 13.8 Q4.2 13.4 3 10.6 Z" fill="#151722"/></svg>
<span class="t" style="left:38.0px;top:7.2px;font-size:13.5px;line-height:20px;color:#e9eaf0;letter-spacing:0.173px;-webkit-text-stroke:0.2px #e9eaf0;">Oscillator</span>
<svg class="abs" style="left:111.9px;top:8.1px;" width="16" height="16" viewBox="0 0 16 16"><circle cx="8" cy="8" r="7" fill="#e4e5ec"/><path d="M7.4 2.6 Q10.6 2 12.6 4.2 Q12.8 6.2 10.8 6.6 Q10.4 8.6 8.2 8.4 Q6.4 7.6 7.2 5.6 Q8.6 4.6 7.4 2.6Z M3 8.6 Q5 8 6.4 9.4 Q8.6 9.8 8.6 11.6 Q7.6 12.4 7.4 13.8 Q4.2 13.4 3 10.6 Z" fill="#151722"/></svg>
<span class="t" style="left:136.4px;top:7.2px;font-size:13.5px;line-height:20px;color:#e9eaf0;transform:scaleX(0.9410);-webkit-text-stroke:0.2px #e9eaf0;">Tasks :: CrowdSurf</span>
<svg class="abs" style="left:260px;top:8.1px;" width="16" height="16" viewBox="0 0 16 16"><path d="M2 8.6 L3.6 5.6 L5.4 10.4 L7.2 5.6 L9 10.4 L10.8 5.6 L12.6 10.4 L14 7.6" stroke="#e4473c" stroke-width="1.5" fill="none"/></svg>
<span class="t" style="left:284.5px;top:7.2px;font-size:13.5px;line-height:20px;color:#e9eaf0;letter-spacing:-0.300px;-webkit-text-stroke:0.2px #e9eaf0;">Browse Labor Cl…</span>
<svg class="abs" style="left:409.5px;top:8.1px;" width="16" height="16" viewBox="0 0 16 16"><circle cx="8" cy="7.6" r="7.2" fill="#fff"/><path d="M1.4 14.8 L2.6 10.8 L5.6 13.6 Z" fill="#fff"/><circle cx="8" cy="7.6" r="6" fill="#2bb741"/><text x="8" y="10.2" font-size="7" font-weight="700" fill="#fff" text-anchor="middle" font-family="Liberation Sans">19</text></svg>
<span class="t" style="left:433.7px;top:7.2px;font-size:13.5px;line-height:20px;color:#e9eaf0;letter-spacing:-0.035px;-webkit-text-stroke:0.2px #e9eaf0;">WhatsApp</span>
<svg class="abs" style="left:511.9px;top:8.1px;" width="16" height="16" viewBox="0 0 16 16"><circle cx="8" cy="8" r="7.6" fill="#1877f2"/><path d="M10.9 10.2 L11.3 7.9 H9.1 V6.5 Q9.1 5.5 10.2 5.5 H11.3 V3.5 Q10.4 3.3 9.5 3.3 Q6.8 3.3 6.8 6.1 V7.9 H4.8 V10.2 H6.8 V15.5 Q8 15.7 9.1 15.5 V10.2 Z" fill="#fff"/></svg>
<span class="t" style="left:536.4px;top:7.2px;font-size:13.5px;line-height:20px;color:#e9eaf0;transform:scaleX(0.9099);-webkit-text-stroke:0.2px #e9eaf0;">Therare Eye</span>
<svg class="abs" style="left:620px;top:8.1px;" width="16" height="16" viewBox="0 0 16 16"><path d="M5 1.6 H14.4 Q15.4 1.6 15.4 2.6 V8.6 Q15.4 9.6 14.4 9.6 H5 Z" fill="#1e8e3e"/><path d="M1.6 4.4 H11 Q12 4.4 12 5.4 V11 Q12 12 11 12 H5.2 L1.6 15 V12 Z" fill="#34c759"/></svg>
<span class="t" style="left:644.8px;top:7.2px;font-size:13.5px;line-height:20px;color:#e9eaf0;letter-spacing:-0.159px;-webkit-text-stroke:0.2px #e9eaf0;">Google Hangouts</span>
<svg class="abs" style="left:764px;top:8.1px;" width="16" height="16" viewBox="0 0 16 16"><defs><linearGradient id="nm" x1="0" y1="0" x2="1" y2="0.3"><stop offset="0" stop-color="#b18cf0"/><stop offset=".5" stop-color="#f08fa0"/><stop offset="1" stop-color="#7fd6c2"/></linearGradient></defs><path d="M0.8 2.4 H15.2 L8 14.4 Z" fill="url(#nm)"/><path d="M8 14.4 L5.2 6.4 L10.8 6.4 Z" fill="#6e7fd9" opacity=".55"/></svg>
<span class="t" style="left:788.2px;top:7.2px;font-size:13.5px;line-height:20px;color:#e9eaf0;letter-spacing:-0.119px;-webkit-text-stroke:0.2px #e9eaf0;">NormalMap-Online</span>
<svg class="abs" style="left:915.7px;top:8.1px;" width="16" height="16" viewBox="0 0 16 16"><circle cx="8" cy="8" r="7.8" fill="#1f6fe0"/><path d="M11.6 3.4 Q6 2.4 4.8 5.4 Q4.4 7.6 8 8.2 Q11 8.8 10.4 10.6 Q9 12.6 4.2 11.8" stroke="#fff" stroke-width="2" fill="none"/></svg>
<span class="t" style="left:940.0px;top:7.2px;font-size:13.5px;line-height:20px;color:#e9eaf0;letter-spacing:-0.142px;-webkit-text-stroke:0.2px #e9eaf0;">Solar Textures |…</span>
<svg class="abs" style="left:1061px;top:8.1px;" width="16" height="16" viewBox="0 0 16 16"><rect width="16" height="16" fill="#2ec66d"/><text x="8" y="11.4" font-size="9.4" font-weight="700" fill="#fff" text-anchor="middle" font-family="Liberation Sans" textLength="12.4" lengthAdjust="spacingAndGlyphs">px</text></svg>
<span class="t" style="left:1085.0px;top:7.2px;font-size:13.5px;line-height:20px;color:#e9eaf0;letter-spacing:-0.290px;-webkit-text-stroke:0.2px #e9eaf0;">Pixabay</span>
<svg class="abs" style="left:1147px;top:8.1px;" width="16" height="16" viewBox="0 0 16 16"><rect width="16" height="16" fill="#fff"/><path d="M6 3.6 L12.4 2.4 V10.6 A1.9 1.7 0 1 1 11.2 9 V4.8 L7.2 5.6 V11.8 A1.9 1.7 0 1 1 6 10.2 Z" fill="#f04a4a"/></svg>
<span class="t" style="left:1171.0px;top:7.2px;font-size:13.5px;line-height:20px;color:#e9eaf0;letter-spacing:-0.006px;-webkit-text-stroke:0.2px #e9eaf0;">download audio…</span>
<svg class="abs" style="left:1338px;top:12.4px;" width="10" height="9" viewBox="0 0 10 9"><path d="M1 1 L4.2 4.4 L1 7.8 M5.4 1 L8.6 4.4 L5.4 7.8" stroke="#e9eaf0" stroke-width="1.5" fill="none"/></svg>
<div class="abs" style="left:0px;top:33px;width:1366px;height:2px;background:#2b2e3c;"></div>
</div>
</body>
</html>
